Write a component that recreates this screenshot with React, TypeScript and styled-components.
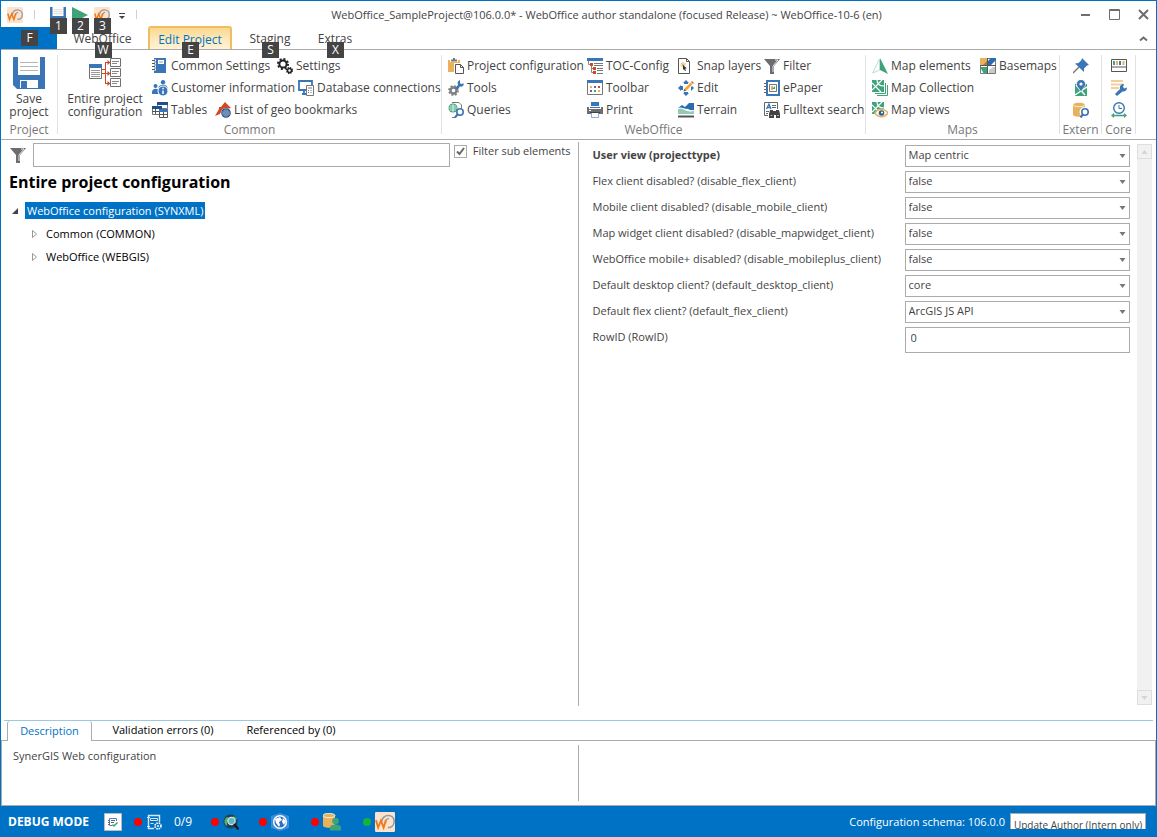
import React from "react";
import styled, { createGlobalStyle, css } from "styled-components";

const blue = "#0072c6";
const ink = "#444444";
const line = "#ababab";
const iconBlue = "#3a75b5";
const green = "#3fa37a";
const amber = "#eab15c";
const red = "#d24726";
const grey = "#6d6d6d";

const GlobalStyle = createGlobalStyle`
  * { box-sizing: border-box; }
  html, body { margin: 0; height: 100%; }
  #root { height: 100%; }
  body, button, input, select {
    font-family: "Open Sans", "Noto Sans", sans-serif;
    font-size: 12px;
    line-height: 16px;
    color: ${ink};
  }
  button { border: 0; padding: 0; margin: 0; background: none; white-space: nowrap; }
  svg { display: block; flex: none; }
`;

const Window = styled.div`
  display: flex;
  flex-direction: column;
  min-height: 100%;
  background: #fff;
  border: 1px solid ${blue};
  border-bottom: 0;
`;

/* ---------- title bar ---------- */
const TitleBar = styled.header`
  display: grid;
  grid-template-columns: 150px 1fr 81px;
  align-items: center;
  height: 27px;
`;
const QuickAccess = styled.div`
  display: flex;
  align-items: center;
  gap: 6px;
  padding-left: 6px;
`;
const QuickButton = styled.button`
  position: relative;
  width: 16px;
  height: 16px;
`;
const QuickSeparator = styled.span<{ $wide?: boolean }>`
  width: 1px;
  height: 9px;
  margin: ${(p) => (p.$wide ? "0 9px 0 5px" : "0 0 0 2px")};
  background: #d0d0d0;
`;
const WindowTitle = styled.h1`
  margin: 0;
  padding-right: 13px;
  font-size: 11px;
  font-weight: 400;
  text-align: center;
  white-space: nowrap;
`;
const WindowButtons = styled.div`
  display: flex;
  gap: 18px;
  padding-left: 5px;
`;
const KeyTip = styled.span<{ $top: number }>`
  position: absolute;
  z-index: 2;
  top: ${(p) => p.$top}px;
  left: 50%;
  width: 17px;
  height: 16px;
  margin-left: -8px;
  background: #444;
  color: #fff;
  font-size: 12px;
  line-height: 16px;
  text-align: center;
`;

/* ---------- ribbon ---------- */
const TabStrip = styled.nav`
  display: flex;
  align-items: flex-end;
  height: 22px;
  border-bottom: 1px solid ${line};
`;
const RibbonTab = styled.button<{ $width: number; $kind?: "file" | "active" }>`
  position: relative;
  width: ${(p) => p.$width}px;
  height: 22px;
  padding-top: 2px;
  ${(p) => p.$kind === "file" && css`background: ${blue};`}
  ${(p) =>
    p.$kind === "active" &&
    css`
      height: 23px;
      color: ${blue};
      background: linear-gradient(#fbd98d, #fdeabf 60%, #fff2d6);
      border: 2px solid #efbd62;
      border-bottom: 0;
      border-radius: 3px 3px 0 0;
    `}
`;
const CollapseButton = styled.button`
  margin: 0 8px 6px auto;
`;
const Ribbon = styled.section`
  display: flex;
  height: 90px;
  padding-top: 5px;
  border-bottom: 1px solid ${line};
`;
const Group = styled.div<{ $width: number; $pad?: number }>`
  display: flex;
  flex-direction: column;
  flex: none;
  width: ${(p) => p.$width}px;
  margin-bottom: 5px;
  padding-left: ${(p) => p.$pad || 0}px;
  border-right: 1px solid #e1e1e1;
  > * { flex-shrink: 0; }
`;
const GroupBody = styled.div`
  display: flex;
  height: 66px;
`;
const GroupName = styled.div<{ $pad?: number }>`
  margin-left: -${(p) => p.$pad || 0}px;
  color: #777;
  line-height: 18px;
  text-align: center;
`;
const BigButton = styled.button<{ $width: number }>`
  display: flex;
  flex-direction: column;
  align-items: center;
  width: ${(p) => p.$width}px;
  padding-top: 2px;
  line-height: 13px;
  white-space: pre-line;
  svg { margin-bottom: 3px; }
`;
const Rows = styled.div`
  display: flex;
  flex-direction: column;
`;
const Row = styled.div`
  display: flex;
`;
const Columns = styled.div<{ $template: string }>`
  display: grid;
  grid-template-columns: ${(p) => p.$template};
  grid-auto-rows: 22px;
`;
const ToolButton = styled.button<{ $width?: number }>`
  display: flex;
  align-items: center;
  gap: 3px;
  width: ${(p) => (p.$width ? p.$width + "px" : "auto")};
  height: 22px;
`;
const IconStack = styled.div`
  display: flex;
  flex-direction: column;
  align-items: center;
  height: 66px;
`;

/* ---------- main area ---------- */
const Main = styled.main`
  display: grid;
  grid-template-columns: 1fr 1fr;
  flex: 1;
  min-height: 400px;
  padding: 2px 0 14px;
`;
const TreePane = styled.section`
  border-right: 1px solid ${line};
`;
const FilterBar = styled.div`
  display: flex;
  align-items: flex-start;
  padding: 1px 7px 0 9px;
  svg { margin: 4px 7px 0 0; }
`;
const FilterInput = styled.input`
  flex: 1;
  min-width: 0;
  height: 24px;
  border: 1px solid ${line};
  outline: 0;
`;
const CheckLabel = styled.label`
  display: flex;
  align-items: center;
  gap: 6px;
  padding-left: 4px;
  font-size: 11px;
  white-space: nowrap;
`;
const CheckBox = styled.input`
  appearance: none;
  width: 13px;
  height: 13px;
  margin: 0;
  border: 1px solid ${line};
  background: #fff;
  &:checked {
    background: url("data:image/svg+xml,%3Csvg xmlns='http://www.w3.org/2000/svg' viewBox='0 0 11 11'%3E%3Cpath d='M2 5.5L4.5 8L9 2' fill='none' stroke='%23666' stroke-width='2'/%3E%3C/svg%3E");
  }
`;
const TreeTitle = styled.h2`
  margin: 3px 0 5px 8px;
  color: #000;
  font-size: 16px;
  line-height: 24px;
`;
const Tree = styled.ul`
  margin: 0;
  padding: 0 0 0 10px;
  list-style: none;
`;
const Branch = styled.ul`
  margin: 0;
  padding: 0 0 0 19px;
  list-style: none;
`;
const Node = styled.div`
  display: flex;
  align-items: center;
  gap: 4px;
  height: 23px;
`;
const NodeName = styled.span<{ $selected?: boolean }>`
  padding: 0 2px;
  color: ${(p) => (p.$selected ? "#fff" : "#000")};
  background: ${(p) => (p.$selected ? blue : "none")};
  font-size: 11px;
  line-height: 17px;
`;
const FormPane = styled.section`
  display: flex;
  padding: 0 4px 0 14px;
`;
const Form = styled.div`
  display: grid;
  grid-template-columns: 312px 1fr;
  grid-auto-rows: 22px;
  row-gap: 4px;
  flex: 1;
  padding: 3px 7px 0 0;
`;
const FieldLabel = styled.label<{ $bold?: boolean }>`
  font-size: 11px;
  font-weight: ${(p) => (p.$bold ? 700 : 400)};
  line-height: 19px;
  white-space: nowrap;
`;
const SelectBox = styled.div`
  display: grid;
  align-items: center;
  svg {
    grid-area: 1 / 1;
    justify-self: end;
    margin-right: 4px;
    pointer-events: none;
  }
`;
const Select = styled.select`
  grid-area: 1 / 1;
  appearance: none;
  width: 100%;
  height: 22px;
  padding: 0 3px 2px;
  border: 1px solid ${line};
  border-radius: 0;
  background: #fff;
  font-size: 11px;
`;
const TextField = styled.input`
  width: 100%;
  height: 26px;
  padding: 0 5px 5px;
  border: 1px solid ${line};
  font-size: 11px;
`;
const ScrollTrack = styled.div`
  display: flex;
  flex-direction: column;
  justify-content: space-between;
  width: 15px;
  margin: 2px 0 1px;
  background: #f1f1f1;
`;
const ScrollButton = styled.button`
  display: grid;
  place-items: center;
  width: 15px;
  height: 15px;
  border: 1px solid #dedede;
`;

/* ---------- detail tabs ---------- */
const DetailTabs = styled.div`
  display: flex;
  height: 20px;
  margin: 0 3px;
  padding-left: 3px;
  border-top: 1px solid #9cc8e3;
`;
const DetailTab = styled.button<{ $width: number; $active?: boolean }>`
  width: ${(p) => p.$width}px;
  height: 18px;
  color: #000;
  font-size: 11px;
  ${(p) =>
    p.$active &&
    css`
      z-index: 1;
      height: 20px;
      color: ${blue};
      background: #fff;
      border: 1px solid ${line};
      border-width: 0 1px;
      border-radius: 3px 3px 0 0;
    `}
`;
const DetailPane = styled.section`
  display: grid;
  grid-template-columns: 1fr 1fr;
  height: 66px;
  padding: 4px 0;
  border: 1px solid ${line};
`;
const Description = styled.p`
  margin: 0;
  padding: 3px 11px;
  border-right: 1px solid ${line};
  font-size: 11px;
`;

/* ---------- status bar ---------- */
const StatusBar = styled.footer`
  display: flex;
  align-items: center;
  height: 31px;
  padding: 0 10px 0 7px;
  background: ${blue};
  color: #fff;
  white-space: nowrap;
`;
const Mode = styled.strong`
  width: 96px;
`;
const StatusItem = styled.div<{ $width: number }>`
  display: flex;
  align-items: center;
  gap: 4px;
  width: ${(p) => p.$width}px;
`;
const Dot = styled.span<{ $ok?: boolean }>`
  width: 8px;
  height: 8px;
  border-radius: 50%;
  background: ${(p) => (p.$ok ? "#12b43c" : "#f00")};
`;
const Schema = styled.span`
  margin-left: auto;
  font-size: 11px;
`;
const UpdateButton = styled.button`
  align-self: flex-start;
  width: 136px;
  height: 16px;
  margin: 7px 0 0 5px;
  padding-top: 3px;
  overflow: hidden;
  background: #fff;
  border: 1px solid ${line};
  border-bottom: 0;
  font-size: 10px;
`;

/* ---------- icons ---------- */
const Svg = ({ s = 16, v = 16, children }: { s?: number; v?: number; children: React.ReactNode }) => (
  <svg width={s} height={s} viewBox={`0 0 ${v} ${v}`} fill="none" aria-hidden="true">{children}</svg>
);

const Logo = ({ s = 16 }: { s?: number }) => (
  <Svg s={s}>
    <rect width="16" height="16" rx="1" fill="#fde3cd" />
    <path d="M5.500 7.500C5.500 4.500 8 2.800 10.500 2.800c3 0 4.800 2 4.800 4.700 0 3-2 5-5 5" stroke="#9a9a9a" strokeWidth="1.300" />
    <path d="M8.500 9C8.300 7 9.300 5.500 11.200 5.300" stroke="#9a9a9a" strokeWidth="1.200" />
    <path d="M.8 6.500l1.700 6L4.700 7l2.200 5.500L8.700 6.500" stroke="#ee7a1c" strokeWidth="1.500" />
  </Svg>
);
const Save = ({ s = 16 }: { s?: number }) => (
  <Svg s={s} v={32}>
    <path d="M0 0h32v32H4l-4-4z" fill={iconBlue} />
    <path d="M5 0h22v18H5zM7 23h18v8H7z" fill="#fff" />
    <path d="M7 5.500h18M7 9.500h18M7 13.500h18" stroke="#b5b5b5" />
    <path d="M8 24h6v7H8z" fill={iconBlue} />
  </Svg>
);
const Play = () => <Svg><path d="M0 0l16 8-16 8z" fill={green} /></Svg>;
const EntireProject = () => (
  <Svg s={32} v={32}>
    <path d="M13 12.500h4M13 16.500h8M16.500 5v22M16.500 5.500h4M16.500 26.500h4" stroke={red} />
    <path d="M18.500 3l3 2.500-3 2.500zM18.500 14l3 2.500-3 2.500zM18.500 24l3 2.500-3 2.500z" fill={red} />
    <path d="M.5 7.500h12v14H.5z" fill="#fff" stroke="#707070" />
    <path d="M0 7h13v4H0z" fill={iconBlue} />
    <path d="M2 13.500h9M2 15.500h9M2 17.500h9M2 19.500h9" stroke="#999" />
    <path d="M21.500 1.500h10v8h-10zM21.500 11.500h10v8h-10zM21.500 21.500h10v8h-10z" fill="#fff" stroke="#707070" />
    <path d="M23 4.500h7M23 6.500h5M23 14.500h7M23 16.500h5M23 24.500h7M23 26.500h5" stroke="#888" />
  </Svg>
);
const Notebook = () => (
  <Svg>
    <path d="M2 0h12v15H2z" fill={iconBlue} />
    <path d="M6 2h6v4H6z" fill="#fff" />
    <path d="M7 4h4" stroke="#999" />
    <path d="M0 2.500h4M0 5.500h4M0 8.500h4M0 11.500h4" stroke="#fff" strokeWidth="2" />
    <path d="M0 2.500h3M0 5.500h3M0 8.500h3M0 11.500h3" stroke="#555" />
  </Svg>
);
const Gears = () => (
  <Svg>
    <circle cx="6" cy="6" r="3.600" stroke="#222" strokeWidth="2" />
    <circle cx="6" cy="6" r="5" stroke="#222" strokeWidth="2" strokeDasharray="2 1.900" />
    <circle cx="12.500" cy="12.500" r="2" stroke="#222" strokeWidth="1.500" />
    <circle cx="12.500" cy="12.500" r="3" stroke="#222" strokeWidth="1.200" strokeDasharray="1.300 1.060" />
  </Svg>
);
const Customer = () => (
  <Svg>
    <circle cx="3.500" cy="6" r="2" fill={iconBlue} />
    <circle cx="11" cy="2.200" r="2.200" fill={iconBlue} />
    <path d="M0 14v-2c0-4 7-4 7-1v3zM6.500 8c0-4.500 9-4.500 9 0v2h-9z" fill={iconBlue} />
    <circle cx="11" cy="11" r="5" fill={iconBlue} stroke="#fff" />
    <path d="M11 10.500v3.500M11 7.700v1.600" stroke="#fff" strokeWidth="1.500" />
  </Svg>
);
const Database = () => (
  <Svg>
    <path d="M14 5V1H1v9h7M4 14h4M6 10v4" stroke={iconBlue} strokeWidth="1.800" />
    <path d="M8.500 5.500h7v10h-7z" fill="#fff" stroke="#777" />
    <path d="M10 8h4M10 10.500h1M12.500 10.500h1M10 12.500h1M12.500 12.500h1" stroke="#777" />
  </Svg>
);
const Tables = () => (
  <Svg>
    <path d="M5.500.5h10v6h-10zM.5 5.500h9v7h-9z" fill="#fff" stroke="#777" />
    <path d="M5 0h11v3H5zM0 4h10v3H0z" fill="#1e4e8c" />
    <path d="M3.500 7v5M0 9.500h7" stroke="#555" />
    <path d="M7.500 7.500h8v8h-8z" fill="#fff" stroke="#555" />
    <path d="M7 7h9v3H7z" fill={iconBlue} />
    <path d="M11.500 10v5M7 12.500h9" stroke="#555" />
  </Svg>
);
const Bookmark = () => (
  <Svg>
    <path d="M0 14l4-7V5h2l4-5 6 6-4 1-5 1-2 4z" fill={red} />
    <circle cx="11" cy="11" r="5" fill="#fff" />
    <circle cx="11" cy="11" r="4.200" stroke="#1e4e8c" strokeWidth="1.200" />
    <path d="M11 7v8M7 11h8M8 9h6M8 13h6M9 8v6M13 8v6" stroke="#1e4e8c" strokeWidth=".8" />
  </Svg>
);
const Clipboard = () => (
  <Svg>
    <path d="M0 2h12v12H0z" fill={amber} />
    <path d="M2 1h8v3H2z" fill="#fff" />
    <path d="M3 1.500h6v2H3zM5 0h2v2H5z" fill="#777" />
    <path d="M6 5h7l3 3v8H6z" fill="#fff" />
    <path d="M7.500 6.500h5l3 3v6h-8z" stroke="#555" />
    <path d="M12.500 6.500v3h3" stroke="#555" />
  </Svg>
);
const Tools = () => (
  <Svg>
    <circle cx="5.500" cy="10.500" r="3" stroke="#808080" strokeWidth="2.400" />
    <circle cx="5.500" cy="10.500" r="4.500" stroke="#808080" strokeWidth="1.800" strokeDasharray="1.900 1.630" />
    <path d="M7 8l3-3c-1-3 0-4 2-5v3l1 1 3-.5c-.5 3-2.500 3.500-4 3L9 10z" fill={iconBlue} />
  </Svg>
);
const Queries = () => (
  <Svg>
    <path d="M4 .5h7l2.500 2.500V6M4 15.500h4" stroke="#777" />
    <circle cx="5" cy="6" r="4.500" fill={green} />
    <path d="M5 2v8M1 6h8M1.800 4h6.400M1.800 8h6.400" stroke="#fff" strokeWidth=".8" />
    <circle cx="12" cy="10" r="3.200" fill="#fff" stroke={iconBlue} strokeWidth="1.600" />
    <path d="M10 12l-3 3.500" stroke={iconBlue} strokeWidth="2" />
  </Svg>
);
const Toc = () => (
  <Svg>
    <path d="M0 0h16v3H0z" fill={iconBlue} />
    <path d="M1.500 3v3.500H4M4.500 7v7.500h2M4.500 10.500h2" stroke="#888" />
    <path d="M7 5.500h9M7 7.500h9M10 10.500h6M10 12.500h6M10 15.500h6" stroke="#777" />
    <path d="M3 5h3v3H3zM6 9h3v3H6zM6 13h3v3H6z" fill={red} />
  </Svg>
);
const Toolbar = () => (
  <Svg>
    <path d="M.5.5h15v14H.5z" stroke="#777" />
    <path d="M0 0h16v3H0z" fill={iconBlue} />
    <path d="M3 6h2v2H3z" fill={amber} /><path d="M7 6h2v2H7z" fill="#8c4fa0" /><path d="M11 6h2v2h-2z" fill={red} />
    <path d="M3 10h2v2H3z" fill="#8c4fa0" /><path d="M7 10h2v2H7z" fill={green} /><path d="M11 10h2v2h-2z" fill={amber} />
  </Svg>
);
const Printer = () => (
  <Svg>
    <path d="M4 0h8v4H4z" fill={iconBlue} />
    <path d="M0 5h2v2h12V5h2v7H0z" fill={grey} />
    <path d="M3 5h10v1H3z" fill={iconBlue} />
    <path d="M2 8h2v1H2z" fill="#fff" />
    <path d="M4.500 10.500h7v5h-7z" fill="#fff" stroke="#8cb0d8" />
    <path d="M3 10.500h10" stroke="#444" />
  </Svg>
);
const Snap = () => (
  <Svg>
    <path d="M.5.5h8l3 3v12H.5z" fill="#fff" stroke="#555" />
    <path d="M8.500.5v3h3" stroke="#555" />
    <path d="M5 4v5M2.500 7h5M3 5l3 3M7.500 5l-4 4" stroke={amber} />
    <path d="M5 7l4 3.500H7l1 2-1 .5-1-2-1 1z" fill="#333" />
  </Svg>
);
const Edit = () => (
  <Svg>
    <path d="M5 3l3-3 3 3zM3 5L0 8l3 3zM5 13l3 3 3-3zM13 5l3 3-3 3z" fill={iconBlue} />
    <path d="M3 6h2v4H3zM6 12h4v2H6zM6 2h4v2H6z" fill={iconBlue} />
    <path d="M7 10l7-7" stroke="#fff" strokeWidth="4.500" />
    <path d="M7 10l6.500-6.500" stroke="#f2a93b" strokeWidth="2.600" />
    <path d="M5.500 11.500l.7-2.500 1.800 1.800z" fill="#555" />
    <path d="M13 2l1-1 2 2-1 1z" fill="#e06040" />
  </Svg>
);
const Terrain = () => (
  <Svg>
    <path d="M0 6l4-3 3 2 4-4h5v9l-6-3z" fill="#2b6cb0" />
    <path d="M0 7c6-2 7 4 16 2v3H0z" fill="#92cbb4" />
    <path d="M0 6.500c6-2 7 3.500 16 2" stroke="#fff" />
    <path d="M0 14.500h16" stroke="#555" strokeWidth="2" />
  </Svg>
);
const Funnel = () => (
  <Svg>
    <path d="M0 1h16l-6 7v8H6V8z" fill={grey} />
    <path d="M11 2h3l-5 6v6" stroke="#e8e8e8" />
  </Svg>
);
const EPaper = () => (
  <Svg>
    <path d="M3 1h12v14H3z" stroke={iconBlue} strokeWidth="2" />
    <path d="M0 3.500h3M0 6.500h3M0 9.500h3M0 12.500h3" stroke="#666" />
    <path d="M5.500 4.500h7v7h-7z" stroke="#777" />
    <path d="M7 6h2v4H7z" fill={amber} /><path d="M8 9l3-3v3z" fill={green} />
  </Svg>
);
const Fulltext = () => (
  <Svg>
    <path d="M4 13.500H.5V.5h13V7" stroke="#666" />
    <path d="M2.500 7L5 2l2 5M3 5.500h3" stroke={iconBlue} strokeWidth="1.300" />
    <path d="M8 3.500h4M8 5.500h4M2 9.500h3M2 11.500h2" stroke="#666" />
    <path d="M6 8h3v1h3V8h3l1 4v4h-4v-3h-2v3H5v-4z" fill="#444" />
    <path d="M6.500 13.500h2M13 13.500h2" stroke="#aaa" />
  </Svg>
);
const MapElements = () => (
  <Svg>
    <path d="M7.500 1L.7 15 7.500 12z" fill="#fff" stroke="#a9d6c4" strokeWidth=".8" />
    <path d="M8 0l8 16-8-4z" fill={green} />
  </Svg>
);
const MapTile = () => (
  <>
    <path d="M0 0h12v12H0z" fill={green} />
    <path d="M0 3l9 9M5 0c0 5 3 6 7 6M0 10L10 0" stroke="#fff" strokeWidth="1.200" />
  </>
);
const MapCollection = () => (
  <Svg><MapTile /><path d="M3 13.500h10.500V3M5 15.500h10.500V5" stroke={green} /></Svg>
);
const MapViews = () => (
  <Svg>
    <MapTile />
    <path d="M3 11c3-5 9-5 13 0-4 5-10 5-13 0z" fill="#fff" stroke={amber} strokeWidth="1.500" />
    <circle cx="9.500" cy="11" r="2.800" fill="#2d5d8c" />
    <circle cx="10" cy="10.500" r="1" fill="#fff" />
  </Svg>
);
const Basemaps = () => (
  <Svg>
    <path d="M.5.5h15v15H.5z" fill="#fff" stroke="#777" />
    <path d="M0 0h7v7H0z" fill={amber} /><path d="M3 7l4-4v4z" fill="#b9782e" />
    <path d="M8 6V3l3-3h5v2l-5 5H8z" fill="#2b6cb0" />
    <path d="M0 9h7v7H4z" fill={green} /><path d="M9 12l4-3h2v6H9z" fill="#c9c9c9" />
    <path d="M7.500 0v16M0 7.500h16" stroke="#555" />
  </Svg>
);
const Pin = () => (
  <Svg>
    <path d="M6 9l-6 6" stroke="#777" strokeWidth="1.500" />
    <path d="M9 0l7 7-2 .5-3 3 0 3.500L2 5.500l3.500-.500 3-3z" fill={iconBlue} />
  </Svg>
);
const MapPin = () => (
  <Svg>
    <path d="M2 4h12v12H2z" fill={green} />
    <path d="M2 15L14 7M3 5l9 10" stroke="#fff" strokeWidth="1.300" />
    <path d="M8 12C5 7 3.500 6.500 3.500 4a4.500 4.500 0 019 0C12.500 6.500 11 7 8 12z" fill={iconBlue} stroke="#fff" strokeWidth=".7" />
    <circle cx="8" cy="4" r="1.600" fill="#fff" />
  </Svg>
);
const Cylinder = () => (
  <>
    <path d="M0 2.500v10c0 3 12 3 12 0v-10z" fill={amber} />
    <ellipse cx="6" cy="2.500" rx="6" ry="2.200" fill={amber} stroke="#fff" strokeWidth=".8" />
  </>
);
const DbSearch = () => (
  <Svg>
    <Cylinder />
    <circle cx="11.500" cy="10" r="5" fill="#fff" />
    <circle cx="12" cy="10" r="3.200" stroke={iconBlue} strokeWidth="1.600" />
    <path d="M10 12.500L7.500 15.500" stroke={iconBlue} strokeWidth="2" />
  </Svg>
);
const Palette = () => (
  <Svg>
    <path d="M.5 1.500h15v12H.5zM0 9h16" stroke="#555" />
    <path d="M3 3v4" stroke={green} strokeWidth="2" /><path d="M6 3v4" stroke={amber} strokeWidth="2" />
    <path d="M9 3v4" stroke={iconBlue} strokeWidth="2" /><path d="M12.500 3v4" stroke={amber} strokeWidth="2" />
  </Svg>
);
const Wrench = () => (
  <Svg>
    <path d="M0 1h12M0 4.500h12M0 8h8" stroke="#f3cf9b" strokeWidth="2" />
    <path d="M4 14l5-5c-.500-3 1-5 4-5l-1 3 1.500 1.500L16 7.500c0 3-2 4.500-4.500 4L6 16z" fill={iconBlue} />
  </Svg>
);
const Clock = () => (
  <Svg>
    <circle cx="8" cy="6" r="5.300" stroke={iconBlue} strokeWidth="1.400" />
    <path d="M8 3v3.500h3" stroke={iconBlue} />
    <path d="M2 13.500h12" stroke={green} strokeWidth="1.600" />
    <path d="M3 11v5l-3-2.500zM13 11v5l3-2.500z" fill={green} />
  </Svg>
);
const Down = ({ fill = "#777" }: { fill?: string }) => (
  <svg width="7" height="4" viewBox="0 0 7 4" aria-hidden="true"><path d="M.5 0h6l-3 4z" fill={fill} /></svg>
);
const SheetCheck = () => (
  <Svg s={18} v={18}>
    <path d="M.5.500h17v17H.5z" fill="#fff" stroke="#bbb" />
    <path d="M12.500 8V5.500h-7v7h3" stroke="#4c7fb8" />
    <path d="M4 7.500h2M4 9.500h2M4 11.500h2M7 7.500h4M7 9.500h3" stroke="#667" />
    <path d="M8.500 11.500l1.500 1.500 3.500-3.500" stroke={green} strokeWidth="1.500" />
  </Svg>
);
const ServerGear = () => (
  <Svg>
    <path d="M8 14.500H2.500V1.500h11V8" stroke="#dbe6f0" strokeWidth="1.400" />
    <path d="M4.500 4.500h7v2h-7zM4.500 9.500h3" stroke="#dbe6f0" />
    <path d="M1 3.500h3M1 12.500h3" stroke="#dbe6f0" />
    <circle cx="12" cy="12" r="3" stroke="#fff" strokeWidth="1.600" strokeDasharray="1.600 .8" />
    <circle cx="12" cy="12" r="1" fill="#fff" />
  </Svg>
);
const GlobeSearch = () => (
  <Svg>
    <circle cx="7.500" cy="7.500" r="7" fill="#1f3f50" />
    <path d="M2 5c3-4 5-1 3 2s0 4-1 5C1 10 1 7 2 5zM10 1.500l4 3-2 2z" fill="#4fae70" />
    <circle cx="8.500" cy="7" r="3.600" fill="#5fb7c4" stroke="#cfe3e8" strokeWidth="1.300" />
    <path d="M11 10l4.500 5.500" stroke="#1b1b1b" strokeWidth="2.400" />
  </Svg>
);
const GlobeBadge = () => (
  <Svg s={18} v={18}>
    <path d="M9 0l9 3v12l-9 3-9-3V3z" fill="#3a8ee0" />
    <circle cx="9" cy="9" r="6.300" fill="#2f6fc0" stroke="#fff" strokeWidth="1.500" />
    <path d="M4 6l5-2 2 3-3 2 1 3-1 2-3-4zM12 5l3 3-2 4-2-3z" fill="#fff" />
  </Svg>
);
const DbUser = () => (
  <Svg s={18} v={18}>
    <Cylinder />
    <circle cx="12.500" cy="8" r="3.300" fill={green} />
    <path d="M7 17.500v-3c0-4 11-4 11 0v3z" fill={green} />
  </Svg>
);

/* ---------- data ---------- */
type Item = [string, () => React.JSX.Element, number?];
const commonRows: Item[][] = [
  [["Common Settings", Notebook, 125], ["Settings", Gears]],
  [["Customer information", Customer, 146], ["Database connections", Database]],
  [["Tables", Tables, 63], ["List of geo bookmarks", Bookmark]],
];
const webOfficeItems: Item[] = [
  ["Project configuration", Clipboard], ["TOC-Config", Toc], ["Snap layers", Snap], ["Filter", Funnel],
  ["Tools", Tools], ["Toolbar", Toolbar], ["Edit", Edit], ["ePaper", EPaper],
  ["Queries", Queries], ["Print", Printer], ["Terrain", Terrain], ["Fulltext search", Fulltext],
];
const fields: [string, string, string][] = [
  ["projecttype", "User view (projecttype)", "Map centric"],
  ["disable_flex_client", "Flex client disabled? (disable_flex_client)", "false"],
  ["disable_mobile_client", "Mobile client disabled? (disable_mobile_client)", "false"],
  ["disable_mapwidget_client", "Map widget client disabled? (disable_mapwidget_client)", "false"],
  ["disable_mobileplus_client", "WebOffice mobile+ disabled? (disable_mobileplus_client)", "false"],
  ["default_desktop_client", "Default desktop client? (default_desktop_client)", "core"],
  ["default_flex_client", "Default flex client? (default_flex_client)", "ArcGIS JS API"],
];

const Tool = ({ item: [label, Icon, width] }: { item: Item }) => (
  <ToolButton $width={width}><Icon />{label}</ToolButton>
);
const IconTool = ({ label, children }: { label: string; children: React.ReactNode }) => (
  <ToolButton aria-label={label}>{children}</ToolButton>
);

export default function App() {
  return (
    <>
      <GlobalStyle />
      <Window>
        <TitleBar>
          <QuickAccess>
            <Logo />
            <QuickSeparator $wide />
            <QuickButton aria-label="Save"><Save /><KeyTip $top={11}>1</KeyTip></QuickButton>
            <QuickButton aria-label="Run"><Play /><KeyTip $top={11}>2</KeyTip></QuickButton>
            <QuickButton aria-label="WebOffice"><Logo /><KeyTip $top={11}>3</KeyTip></QuickButton>
            <button aria-label="Customize">
              <Svg s={12} v={12}><path d="M3 4.500h6" stroke={ink} /><path d="M3 7h6l-3 3z" fill={ink} /></Svg>
            </button>
            <QuickSeparator />
          </QuickAccess>
          <WindowTitle>WebOffice_SampleProject@106.0.0* - WebOffice author standalone (focused Release) ~ WebOffice-10-6 (en)</WindowTitle>
          <WindowButtons>
            <button aria-label="Minimize"><Svg s={11} v={11}><path d="M1 6h9" stroke={grey} strokeWidth="2" /></Svg></button>
            <button aria-label="Maximize"><Svg s={11} v={11}><path d="M.5.500h10v10H.5zM0 1.500h11" stroke={grey} /></Svg></button>
            <button aria-label="Close"><Svg s={11} v={11}><path d="M1 1l9 9M10 1l-9 9" stroke={grey} strokeWidth="2" /></Svg></button>
          </WindowButtons>
        </TitleBar>

        <TabStrip>
          <RibbonTab $width={56} $kind="file" aria-label="File"><KeyTip $top={3}>F</KeyTip></RibbonTab>
          <RibbonTab $width={91}>WebOffice<KeyTip $top={15}>W</KeyTip></RibbonTab>
          <RibbonTab $width={84} $kind="active">Edit Project<KeyTip $top={14}>E</KeyTip></RibbonTab>
          <RibbonTab $width={76}>Staging<KeyTip $top={15}>S</KeyTip></RibbonTab>
          <RibbonTab $width={54}>Extras<KeyTip $top={15}>X</KeyTip></RibbonTab>
          <CollapseButton aria-label="Collapse ribbon">
            <Svg s={9} v={9}><path d="M1 6.500l3.500-3 3.500 3" stroke={grey} strokeWidth="2" /></Svg>
          </CollapseButton>
        </TabStrip>

        <Ribbon>
          <Group $width={57}>
            <GroupBody><BigButton $width={56}><Save s={32} />{"Save\nproject"}</BigButton></GroupBody>
            <GroupName>Project</GroupName>
          </Group>
          <Group $width={384}>
            <GroupBody>
              <BigButton $width={94}><EntireProject />{"Entire project\nconfiguration"}</BigButton>
              <Rows>
                {commonRows.map((row, i) => <Row key={i}>{row.map((it) => <Tool key={it[0]} item={it} />)}</Row>)}
              </Rows>
            </GroupBody>
            <GroupName>Common</GroupName>
          </Group>
          <Group $width={424} $pad={6}>
            <Columns $template="139px 91px 86px 1fr">
              {webOfficeItems.map((it) => <Tool key={it[0]} item={it} />)}
            </Columns>
            <GroupName $pad={6}>WebOffice</GroupName>
          </Group>
          <Group $width={194} $pad={6}>
            <Rows>
              <Row><Tool item={["Map elements", MapElements, 108]} /><Tool item={["Basemaps", Basemaps]} /></Row>
              <Row><Tool item={["Map Collection", MapCollection]} /></Row>
              <Row><Tool item={["Map views", MapViews]} /></Row>
            </Rows>
            <GroupName $pad={6}>Maps</GroupName>
          </Group>
          <Group $width={42}>
            <IconStack>
              <IconTool label="Pin"><Pin /></IconTool>
              <IconTool label="Map location"><MapPin /></IconTool>
              <IconTool label="Search database"><DbSearch /></IconTool>
            </IconStack>
            <GroupName>Extern</GroupName>
          </Group>
          <Group $width={34}>
            <IconStack>
              <IconTool label="Themes"><Palette /></IconTool>
              <IconTool label="Configure"><Wrench /></IconTool>
              <IconTool label="Timing"><Clock /></IconTool>
            </IconStack>
            <GroupName>Core</GroupName>
          </Group>
        </Ribbon>

        <Main>
          <TreePane>
            <FilterBar>
              <Funnel />
              <FilterInput aria-label="Filter" />
              <CheckLabel><CheckBox type="checkbox" defaultChecked />Filter sub elements</CheckLabel>
            </FilterBar>
            <TreeTitle>Entire project configuration</TreeTitle>
            <Tree>
              <li>
                <Node>
                  <Svg s={10} v={10}><path d="M7 2v6H1z" fill={ink} /></Svg>
                  <NodeName $selected>WebOffice configuration (SYNXML)</NodeName>
                </Node>
                <Branch>
                  {["Common (COMMON)", "WebOffice (WEBGIS)"].map((name) => (
                    <li key={name}>
                      <Node>
                        <Svg s={10} v={10}><path d="M2.500 1.500v7L6.500 5z" stroke="#999" /></Svg>
                        <NodeName>{name}</NodeName>
                      </Node>
                    </li>
                  ))}
                </Branch>
              </li>
            </Tree>
          </TreePane>
          <FormPane>
            <Form>
              {fields.map(([id, label, value], i) => (
                <React.Fragment key={id}>
                  <FieldLabel htmlFor={id} $bold={i === 0}>{label}</FieldLabel>
                  <SelectBox>
                    <Select id={id} defaultValue={value}><option>{value}</option></Select>
                    <Down />
                  </SelectBox>
                </React.Fragment>
              ))}
              <FieldLabel htmlFor="RowID">RowID (RowID)</FieldLabel>
              <TextField id="RowID" defaultValue="0" />
            </Form>
            <ScrollTrack>
              <ScrollButton aria-label="Scroll up">
                <svg width="7" height="4" viewBox="0 0 7 4"><path d="M.5 4h6l-3-4z" fill="#d5d5d5" /></svg>
              </ScrollButton>
              <ScrollButton aria-label="Scroll down"><Down fill="#d5d5d5" /></ScrollButton>
            </ScrollTrack>
          </FormPane>
        </Main>

        <DetailTabs>
          <DetailTab $width={85} $active>Description</DetailTab>
          <DetailTab $width={142}>Validation errors (0)</DetailTab>
          <DetailTab $width={114}>Referenced by (0)</DetailTab>
        </DetailTabs>
        <DetailPane><Description>SynerGIS Web configuration</Description></DetailPane>

        <StatusBar>
          <Mode>DEBUG MODE</Mode>
          <StatusItem $width={30}><SheetCheck /></StatusItem>
          <StatusItem $width={40}><Dot /><ServerGear /></StatusItem>
          <StatusItem $width={37}>0/9</StatusItem>
          <StatusItem $width={48}><Dot /><GlobeSearch /></StatusItem>
          <StatusItem $width={52}><Dot /><GlobeBadge /></StatusItem>
          <StatusItem $width={52}><Dot /><DbUser /></StatusItem>
          <StatusItem $width={34}><Dot $ok /><Logo s={20} /></StatusItem>
          <Schema>Configuration schema: 106.0.0</Schema>
          <UpdateButton>Update Author (Intern only)</UpdateButton>
        </StatusBar>
      </Window>
    </>
  );
}
